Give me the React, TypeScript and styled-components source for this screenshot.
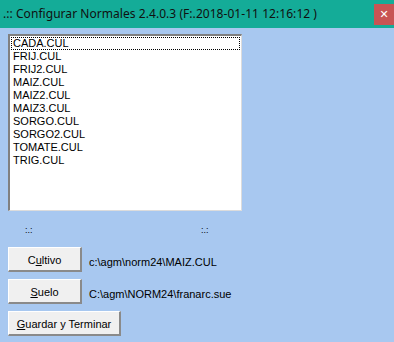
import React from "react";
import styled, { createGlobalStyle } from "styled-components";

const GlobalStyle = createGlobalStyle`
    html, body {
        margin: 0;
        padding: 0;
    }
    body {
        width: 394px;
        height: 342px;
        overflow: hidden;
        background: #a8c8f0;
    }
`;

const WindowFrame = styled.div`
    width: 394px;
    height: 342px;
    display: flex;
    flex-direction: column;
    background: #a8c8f0;
    font-family: "Liberation Sans", Arial, sans-serif;
`;

const TitleBar = styled.div`
    height: 28px;
    flex: none;
    display: flex;
    align-items: flex-start;
    justify-content: space-between;
    background: #14ac98;
`;

const TitleText = styled.span`
    font-family: "Noto Sans", "Open Sans", sans-serif;
    font-size: 12px;
    letter-spacing: 0.05px;
    color: #101010;
    padding: 5px 0 0 3px;
    white-space: nowrap;
`;

const CloseButton = styled.div`
    width: 20px;
    height: 21px;
    margin-top: 4px;
    background: #c85454;
    color: #fff;
    font-family: "DejaVu Sans", sans-serif;
    font-size: 11px;
    font-weight: bold;
    display: flex;
    align-items: center;
    justify-content: center;
`;

const Body = styled.div`
    display: flex;
    flex-direction: column;
    padding: 6px 0 0 8px;
`;

const ListBox = styled.div`
    width: 234px;
    height: 177px;
    box-sizing: border-box;
    background: #fff;
    border-top: 2px solid #808080;
    border-left: 2px solid #808080;
    border-right: 1px solid #dcdcdc;
    border-bottom: 1px solid #dcdcdc;
    padding: 1px 1px 0 1px;
    display: flex;
    flex-direction: column;
`;

const ListItem = styled.div<{ $focused?: boolean }>`
    height: 13px;
    line-height: 13px;
    font-size: 11px;
    color: #000;
    padding-left: 2px;
    outline: ${(p) => (p.$focused ? "1px dotted #000" : "none")};
    outline-offset: -1px;
`;

const StatusRow = styled.div`
    display: flex;
    height: 36px;
    align-items: center;
    font-size: 9px;
    color: #000;
    padding-top: 2px;
    box-sizing: border-box;
`;

const StatusDots = styled.span<{ $width: number }>`
    width: ${(p) => p.$width}px;
    box-sizing: border-box;
    padding-left: 17px;
`;

const ButtonRow = styled.div`
    display: flex;
    align-items: center;
    gap: 7px;
    margin-bottom: 7px;
`;

const Button = styled.div<{ $width: number }>`
    width: ${(p) => p.$width}px;
    height: 25px;
    box-sizing: border-box;
    background: #f0f0f0;
    border-top: 1px solid #fff;
    border-left: 1px solid #fff;
    border-right: 2px solid #8a8a8a;
    border-bottom: 2px solid #8a8a8a;
    display: flex;
    align-items: center;
    justify-content: center;
    font-size: 11px;
    color: #000;
    padding-top: 1px;

    u {
        text-underline-offset: 1px;
    }
`;

const PathLabel = styled.span`
    font-size: 11px;
    color: #000;
    padding-top: 4px;
`;

const crops = [
    "CADA.CUL",
    "FRIJ.CUL",
    "FRIJ2.CUL",
    "MAIZ.CUL",
    "MAIZ2.CUL",
    "MAIZ3.CUL",
    "SORGO.CUL",
    "SORGO2.CUL",
    "TOMATE.CUL",
    "TRIG.CUL",
];

export default function App() {
    return (
        <>
            <GlobalStyle />
            <WindowFrame>
                <TitleBar>
                    <TitleText>.:: Configurar Normales 2.4.0.3 (F:.2018-01-11 12:16:12 )</TitleText>
                    <CloseButton>✕</CloseButton>
                </TitleBar>
                <Body>
                    <ListBox>
                        {crops.map((c, i) => (
                            <ListItem key={c} $focused={i === 0}>{c}</ListItem>
                        ))}
                    </ListBox>
                    <StatusRow>
                        <StatusDots $width={176}>:.:</StatusDots>
                        <StatusDots $width={60}>:.:</StatusDots>
                    </StatusRow>
                    <ButtonRow>
                        <Button $width={74}>C<u>u</u>ltivo</Button>
                        <PathLabel>c:\agm\norm24\MAIZ.CUL</PathLabel>
                    </ButtonRow>
                    <ButtonRow>
                        <Button $width={74}><u>S</u>uelo</Button>
                        <PathLabel>C:\agm\NORM24\franarc.sue</PathLabel>
                    </ButtonRow>
                    <ButtonRow>
                        <Button $width={113}><u>G</u>uardar y Terminar</Button>
                    </ButtonRow>
                </Body>
            </WindowFrame>
        </>
    );
}
